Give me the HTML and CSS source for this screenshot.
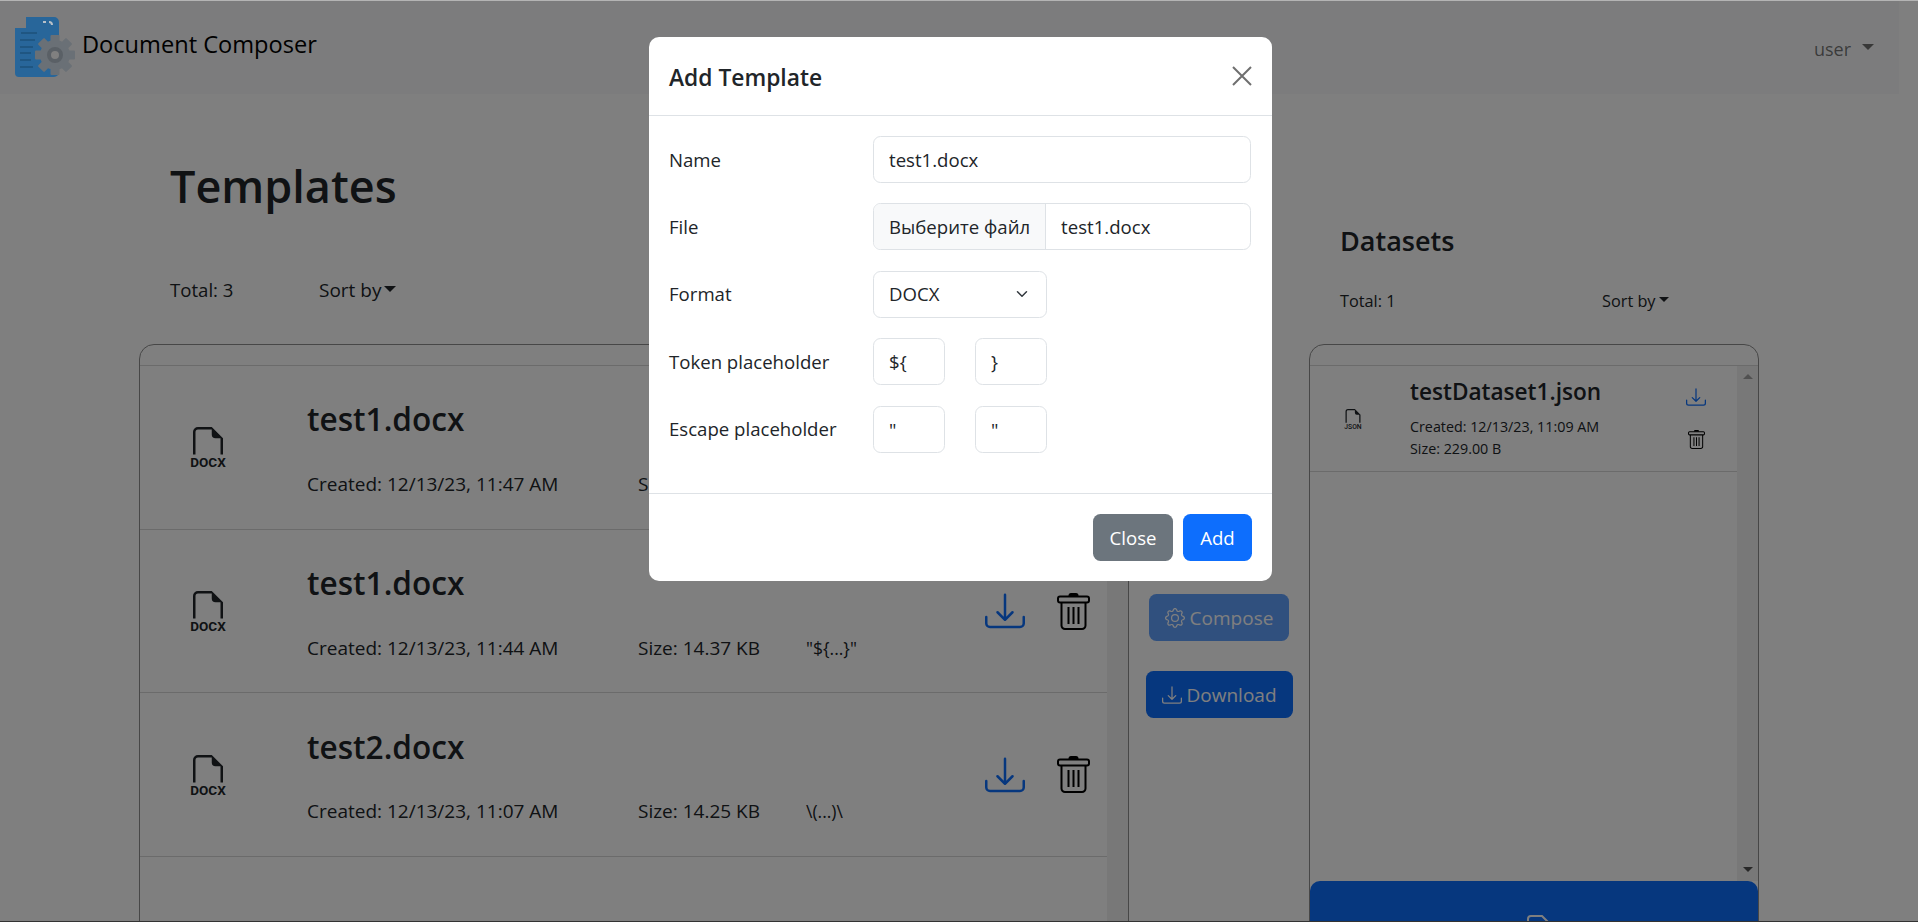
FILE: index.html
```html
<!DOCTYPE html>
<html lang="en">
<head>
<meta charset="UTF-8">
<meta name="viewport" content="width=device-width, initial-scale=1.0">
<title>Document Composer</title>
<link rel="stylesheet" href="styles.css">
</head>
<body>

<svg class="sprite" xmlns="http://www.w3.org/2000/svg">
    <symbol id="i-page" viewBox="0 0 16 16">
        <path d="M14 4.5V11h-1V4.5h-2A1.5 1.5 0 0 1 9.5 3V1H4a1 1 0 0 0-1 1v9H2V2a2 2 0 0 1 2-2h5.5L14 4.5Z"/>
    </symbol>
    <symbol id="i-download" viewBox="0 0 16 16">
        <path d="M.5 9.9a.5.5 0 0 1 .5.5v2.5a1 1 0 0 0 1 1h12a1 1 0 0 0 1-1v-2.5a.5.5 0 0 1 1 0v2.5a2 2 0 0 1-2 2H2a2 2 0 0 1-2-2v-2.5a.5.5 0 0 1 .5-.5z"/>
        <path d="M7.646 11.854a.5.5 0 0 0 .708 0l3-3a.5.5 0 0 0-.708-.708L8.5 10.293V1.5a.5.5 0 0 0-1 0v8.793L5.354 8.146a.5.5 0 1 0-.708.708l3 3z"/>
    </symbol>
    <symbol id="i-trash" viewBox="0 0 33 37">
        <path d="M11.5 3V2.500Q11.500 0 14 0h5q2.500 0 2.500 2.500V3z" fill="#000"/>
        <rect x="1" y="3.500" width="31" height="6" rx="2" fill="none" stroke="#000" stroke-width="2"/>
        <path d="M4.500 9.500V32.500a3.500 3.500 0 0 0 3.500 3.500H25a3.500 3.500 0 0 0 3.500-3.500V9.500" fill="none" stroke="#000" stroke-width="2"/>
        <path d="M11.500 14V31M16.500 14V31M21.500 14V31" fill="none" stroke="#000" stroke-width="2"/>
    </symbol>
    <symbol id="i-gear" viewBox="0 0 16 16">
        <path d="M8 4.754a3.246 3.246 0 1 0 0 6.492 3.246 3.246 0 0 0 0-6.492zM5.754 8a2.246 2.246 0 1 1 4.492 0 2.246 2.246 0 0 1-4.492 0z"/>
        <path d="M9.796 1.343c-.527-1.790-3.065-1.790-3.592 0l-.094.319a.873.873 0 0 1-1.255.52l-.292-.16c-1.640-.892-3.433.902-2.540 2.541l.159.292a.873.873 0 0 1-.52 1.255l-.319.094c-1.790.527-1.790 3.065 0 3.592l.319.094a.873.873 0 0 1 .52 1.255l-.16.292c-.892 1.640.901 3.434 2.541 2.540l.292-.159a.873.873 0 0 1 1.255.52l.094.319c.527 1.790 3.065 1.790 3.592 0l.094-.319a.873.873 0 0 1 1.255-.52l.292.16c1.640.893 3.434-.902 2.540-2.541l-.159-.292a.873.873 0 0 1 .52-1.255l.319-.094c1.790-.527 1.790-3.065 0-3.592l-.319-.094a.873.873 0 0 1-.52-1.255l.16-.292c.893-1.640-.902-3.433-2.541-2.540l-.292.159a.873.873 0 0 1-1.255-.52l-.094-.319zm-2.633.283c.246-.835 1.428-.835 1.674 0l.094.319a1.873 1.873 0 0 0 2.693 1.115l.291-.16c.764-.415 1.600.42 1.184 1.185l-.159.292a1.873 1.873 0 0 0 1.116 2.692l.318.094c.835.246.835 1.428 0 1.674l-.319.094a1.873 1.873 0 0 0-1.115 2.693l.16.291c.415.764-.42 1.600-1.185 1.184l-.291-.159a1.873 1.873 0 0 0-2.693 1.116l-.094.318c-.246.835-1.428.835-1.674 0l-.094-.319a1.873 1.873 0 0 0-2.692-1.115l-.292.16c-.764.415-1.600-.42-1.184-1.185l.159-.291A1.873 1.873 0 0 0 1.945 8.930l-.319-.094c-.835-.246-.835-1.428 0-1.674l.319-.094A1.873 1.873 0 0 0 3.060 4.377l-.16-.292c-.415-.764.42-1.600 1.185-1.184l.292.159a1.873 1.873 0 0 0 2.692-1.115l.094-.319z"/>
    </symbol>
</svg>

<div class="page">
    <nav class="navbar">
        <div class="brand">
            <svg class="logo" viewBox="0 0 60 60">
                <path class="logo-doc" d="M11 0H39a5 5 0 0 1 5 5V55a5 5 0 0 1-5 5H4a4 4 0 0 1-4-4V11H11z"/>
                <path class="logo-lines" d="M6 16H22M5 23H20M5 30H18M5 36H16M5 43H16M5 50H18"/>
                <path class="logo-mark" d="M28 5h3M34 5a3 3 0 0 1 3 3"/>
                <g class="logo-gear">
                    <circle cx="40" cy="38" r="15"/>
                    <rect x="35.500" y="18" width="9" height="40" rx="1"/>
                    <rect x="35.500" y="18" width="9" height="40" rx="1" transform="rotate(45 40 38)"/>
                    <rect x="35.500" y="18" width="9" height="40" rx="1" transform="rotate(90 40 38)"/>
                    <rect x="35.500" y="18" width="9" height="40" rx="1" transform="rotate(135 40 38)"/>
                </g>
                <circle class="logo-hub" cx="40" cy="38" r="6"/>
            </svg>
            <span class="brand-name">Document Composer</span>
        </div>
        <div class="user-menu">user<span class="caret"></span></div>
    </nav>

    <div class="main">
        <section class="col-templates">
            <h1 class="page-title">Templates</h1>
            <div class="toolbar">
                <span class="total">Total: 3</span>
                <span class="sort">Sort by<span class="caret caret-tight"></span></span>
            </div>
            <div class="card">
                <div class="card-scroll">
                    <div class="list">
                        <div class="tpl-row">
                            <div class="tpl-icon">
                                <svg class="filetype" viewBox="0 0 16 18"><use href="#i-page" width="16" height="16"/><text x="8" y="15.900" text-anchor="middle">DOCX</text></svg>
                            </div>
                            <div class="tpl-body">
                                <h3 class="tpl-name">test1.docx</h3>
                                <div class="tpl-meta">
                                    <span class="meta-created">Created: 12/13/23, 11:47 AM</span>
                                    <span class="meta-size">Size: 14.37 KB</span>
                                    <span class="meta-format">"${...}"</span>
                                </div>
                            </div>
                            <div class="tpl-actions">
                                <svg class="ic-download"><use href="#i-download"/></svg>
                                <svg class="ic-trash"><use href="#i-trash"/></svg>
                            </div>
                        </div>
                        <div class="tpl-row">
                            <div class="tpl-icon">
                                <svg class="filetype" viewBox="0 0 16 18"><use href="#i-page" width="16" height="16"/><text x="8" y="15.900" text-anchor="middle">DOCX</text></svg>
                            </div>
                            <div class="tpl-body">
                                <h3 class="tpl-name">test1.docx</h3>
                                <div class="tpl-meta">
                                    <span class="meta-created">Created: 12/13/23, 11:44 AM</span>
                                    <span class="meta-size">Size: 14.37 KB</span>
                                    <span class="meta-format">"${...}"</span>
                                </div>
                            </div>
                            <div class="tpl-actions">
                                <svg class="ic-download"><use href="#i-download"/></svg>
                                <svg class="ic-trash"><use href="#i-trash"/></svg>
                            </div>
                        </div>
                        <div class="tpl-row">
                            <div class="tpl-icon">
                                <svg class="filetype" viewBox="0 0 16 18"><use href="#i-page" width="16" height="16"/><text x="8" y="15.900" text-anchor="middle">DOCX</text></svg>
                            </div>
                            <div class="tpl-body">
                                <h3 class="tpl-name">test2.docx</h3>
                                <div class="tpl-meta">
                                    <span class="meta-created">Created: 12/13/23, 11:07 AM</span>
                                    <span class="meta-size">Size: 14.25 KB</span>
                                    <span class="meta-format">\(...)\</span>
                                </div>
                            </div>
                            <div class="tpl-actions">
                                <svg class="ic-download"><use href="#i-download"/></svg>
                                <svg class="ic-trash"><use href="#i-trash"/></svg>
                            </div>
                        </div>
                    </div>
                    <div class="scrollbar"></div>
                </div>
            </div>
        </section>

        <section class="col-actions">
            <button class="btn btn-primary btn-disabled" type="button"><svg class="btn-icon"><use href="#i-gear"/></svg>Compose</button>
            <button class="btn btn-primary" type="button"><svg class="btn-icon"><use href="#i-download"/></svg>Download</button>
        </section>

        <section class="col-datasets">
            <h4 class="section-title">Datasets</h4>
            <div class="toolbar toolbar-sm">
                <span class="total">Total: 1</span>
                <span class="sort">Sort by<span class="caret caret-tight"></span></span>
            </div>
            <div class="card">
                <div class="card-scroll card-scroll-short">
                    <div class="list">
                        <div class="ds-row">
                            <div class="ds-icon">
                                <svg class="filetype-sm" viewBox="0 0 16 18"><use href="#i-page" width="16" height="16"/><text x="8" y="15.900" text-anchor="middle">JSON</text></svg>
                            </div>
                            <div class="ds-body">
                                <h5 class="ds-name">testDataset1.json</h5>
                                <div class="ds-meta">Created: 12/13/23, 11:09 AM</div>
                                <div class="ds-meta">Size: 229.00 B</div>
                            </div>
                            <div class="ds-actions">
                                <svg class="ic-download-sm"><use href="#i-download"/></svg>
                                <svg class="ic-trash-sm"><use href="#i-trash"/></svg>
                            </div>
                        </div>
                    </div>
                    <div class="scrollbar">
                        <span class="arrow-up"></span>
                        <span class="arrow-down"></span>
                    </div>
                </div>
                <button class="btn-upload" type="button">
                    <svg class="upload-icon" viewBox="0 0 24 30"><path d="M1 29V4a3 3 0 0 1 3-3H15L23 9V29"/></svg>
                </button>
            </div>
        </section>
    </div>
</div>

<div class="backdrop"></div>

<div class="modal">
    <div class="modal-header">
        <h5 class="modal-title">Add Template</h5>
        <svg class="modal-close" viewBox="0 0 20 20"><path d="M1 1L19 19M19 1L1 19"/></svg>
    </div>
    <form class="modal-body">
        <div class="form-row">
            <label class="form-label" for="tplName">Name</label>
            <input class="form-control" id="tplName" type="text" value="test1.docx">
        </div>
        <div class="form-row">
            <label class="form-label">File</label>
            <div class="file-input">
                <span class="file-button">Выберите файл</span>
                <span class="file-name">test1.docx</span>
            </div>
        </div>
        <div class="form-row">
            <label class="form-label" for="tplFormat">Format</label>
            <select class="form-select" id="tplFormat">
                <option>DOCX</option>
            </select>
        </div>
        <div class="form-row">
            <label class="form-label" for="tokenStart">Token placeholder</label>
            <div class="pair">
                <input class="form-control" id="tokenStart" type="text" value="${">
                <input class="form-control" type="text" value="}">
            </div>
        </div>
        <div class="form-row">
            <label class="form-label" for="escapeStart">Escape placeholder</label>
            <div class="pair">
                <input class="form-control" id="escapeStart" type="text" value="&quot;">
                <input class="form-control" type="text" value="&quot;">
            </div>
        </div>
    </form>
    <div class="modal-footer">
        <button class="btn btn-secondary" type="button">Close</button>
        <button class="btn btn-add" type="button">Add</button>
    </div>
</div>

</body>
</html>
```

FILE: styles.css
```css
* {
    box-sizing: border-box;
}
html, body {
    height: 100%;
    overflow: hidden;
}
body {
    margin: 0;
    background-color: #ffffff;
    color: #212529;
    font-family: "Open Sans", "Noto Sans", sans-serif;
    font-size: 18.6px;
    line-height: 30px;
}
h1, h3, h4, h5 {
    margin: 0;
    font-weight: 600;
}
.sprite {
    display: none;
}
.page {
    width: 1899px;
}

/* navbar */
.navbar {
    display: flex;
    align-items: center;
    justify-content: space-between;
    height: 94px;
    padding: 0 25px 0 15px;
    background-color: #f8f9fa;
}
.brand {
    display: flex;
    align-items: center;
}
/* logo keeps its own dimmed colours, the image was darker than the overlay gives */
.logo {
    position: relative;
    z-index: 1;
    width: 60px;
    height: 60px;
}
.logo-doc {
    fill: #28669a;
}
.logo-lines {
    fill: none;
    stroke: #1f5682;
    stroke-width: 2;
}
.logo-mark {
    fill: none;
    stroke: #b8c0c8;
    stroke-width: 2;
}
.logo-gear {
    fill: #6a7076;
}
.logo-hub {
    fill: #808080;
    stroke: #5a6066;
    stroke-width: 4;
}
.brand-name {
    margin: 0 0 6px 7px;
    font-size: 23.6px;
    color: #000000;
}
.user-menu {
    display: flex;
    align-items: center;
    margin-top: 3px;
    color: rgba(0, 0, 0, 0.55);
    font-size: 18px;
}
.caret {
    width: 0;
    height: 0;
    margin: -3px 0 0 11px;
    border-top: 6px solid currentColor;
    border-left: 6px solid transparent;
    border-right: 6px solid transparent;
}
.caret-tight {
    margin: -3px 0 0 3px;
}

/* columns */
.main {
    display: grid;
    grid-template-columns: 990px 180px 450px;
    padding-left: 139px;
}
.col-templates {
    padding-top: 54px;
}
.col-actions {
    display: flex;
    flex-direction: column;
    align-items: center;
    gap: 30px;
    padding-top: 500px;
    font-size: 19px;
}
.col-actions .btn {
    padding: 0 16px;
}
.col-datasets {
    padding-top: 124px;
}
.page-title {
    margin: 0 0 52px 31px;
    font-size: 45px;
    line-height: 75px;
}
.section-title {
    margin: 0 0 25px 31px;
    font-size: 27px;
    line-height: 45px;
}
.toolbar {
    display: flex;
    margin-bottom: 39px;
    padding-left: 31px;
}
.total {
    width: 149px;
}
.sort {
    display: flex;
    align-items: center;
    font-size: 19px;
}
.toolbar-sm {
    margin-bottom: 30px;
    font-size: 16.3px;
    line-height: 26px;
}
.toolbar-sm .total {
    width: 262px;
}
.toolbar-sm .sort {
    font-size: 16.3px;
}
.toolbar-sm .caret {
    border-top-width: 5px;
    border-left-width: 5px;
    border-right-width: 5px;
}

/* cards */
.card {
    height: 700px;
    padding-top: 20px;
    border: 1px solid #8e8e8e;
    border-radius: 15px;
    overflow: hidden;
}
.card-scroll {
    display: flex;
    height: 680px;
    border-top: 1px solid #d6d6d6;
}
.card-scroll-short {
    height: 516px;
}
.list {
    flex: 1;
}
.scrollbar {
    display: flex;
    flex-direction: column;
    justify-content: space-between;
    align-items: center;
    flex: none;
    width: 21px;
    padding: 8px 0 9px;
    background-color: #f1f1f1;
}
.arrow-up, .arrow-down {
    width: 0;
    height: 0;
    border-left: 5px solid transparent;
    border-right: 5px solid transparent;
}
.arrow-up {
    border-bottom: 5px solid #a3a3a3;
}
.arrow-down {
    border-top: 5px solid #505050;
}

/* template rows */
.tpl-row {
    display: flex;
    align-items: center;
    height: 163.7px;
    border-bottom: 1px solid #d6d6d6;
}
.tpl-icon {
    flex: none;
    width: 167px;
    padding-left: 48px;
}
.filetype {
    display: block;
    width: 40px;
    height: 45px;
    margin-top: 5px;
    fill: #212529;
}
.filetype text {
    font-family: Roboto, sans-serif;
    font-size: 5.4px;
    font-weight: 700;
}
.tpl-body {
    flex: 1;
    padding-top: 2.5px;
}
.tpl-name {
    margin-bottom: 28.5px;
    font-size: 31.6px;
    line-height: 42px;
}
.tpl-meta {
    display: flex;
    font-size: 19px;
}
.meta-created {
    width: 331px;
}
.meta-size {
    width: 168px;
}
.meta-format {
    font-size: 17.5px;
}
.tpl-actions {
    display: flex;
    align-items: center;
    gap: 32px;
    padding-right: 17px;
}
.ic-download {
    width: 40px;
    height: 40px;
    fill: #0d6efd;
}
.ic-trash {
    width: 33px;
    height: 37px;
}

/* dataset rows */
.ds-row {
    display: flex;
    align-items: center;
    height: 106px;
    border-bottom: 1px solid #d6d6d6;
}
.ds-icon {
    flex: none;
    width: 100px;
    padding-left: 33px;
}
.filetype-sm {
    display: block;
    width: 20px;
    height: 22.5px;
    margin-top: 2.5px;
    fill: #212529;
}
.filetype-sm text {
    font-family: Roboto, sans-serif;
    font-size: 5.4px;
    font-weight: 500;
}
.ds-body {
    flex: 1;
}
.ds-name {
    margin-bottom: 9px;
    font-size: 22.6px;
    line-height: 30px;
}
.ds-meta {
    font-size: 14.3px;
    line-height: 22.5px;
}
.ds-actions {
    display: flex;
    flex-direction: column;
    align-items: center;
    gap: 23px;
    padding: 0 31px 2px 0;
}
.ic-download-sm {
    width: 20px;
    height: 20px;
    fill: #0d6efd;
}
.ic-trash-sm {
    width: 17px;
    height: 19px;
}
.btn-upload {
    display: flex;
    justify-content: center;
    width: 100%;
    height: 100px;
    padding: 34px 0 0 10px;
    border: 0;
    border-radius: 10px;
    background-color: #0d6efd;
}
.upload-icon {
    width: 24px;
    height: 30px;
    fill: none;
    stroke: #ffffff;
    stroke-width: 2;
}

/* buttons */
.btn {
    display: inline-flex;
    align-items: center;
    justify-content: center;
    height: 47px;
    padding: 0 15px;
    border: 0;
    border-radius: 7.5px;
    color: #ffffff;
    font: inherit;
    cursor: pointer;
}
.btn-primary, .btn-add {
    background-color: #0d6efd;
}
.btn-secondary {
    width: 80px;
    background-color: #6c757d;
}
.btn-add {
    width: 69px;
}
.btn-disabled {
    opacity: 0.65;
}
.btn-icon {
    width: 20px;
    height: 20px;
    margin-right: 5px;
    fill: currentColor;
}

/* modal, sits over the dimmed page */
.backdrop {
    position: fixed;
    inset: 0;
    border-top: 1px solid #b4b4b4;
    border-bottom: 1px solid #333333;
    background-color: rgba(0, 0, 0, 0.5);
}
.modal {
    position: fixed;
    top: 37px;
    left: 649px;
    width: 623px;
    height: 544px;
    border-radius: 10px;
    background-color: #ffffff;
}
.modal-header {
    display: flex;
    align-items: center;
    justify-content: space-between;
    height: 79px;
    padding: 0 20px;
    border-bottom: 1px solid #dee2e6;
}
.modal-title {
    margin-top: 4px;
    font-size: 22.8px;
    line-height: 37.5px;
}
.modal-close {
    width: 20px;
    height: 20px;
    fill: none;
    stroke: #6f6f6f;
    stroke-width: 2;
}
.modal-body {
    height: 378px;
    padding: 20px 21px 0 20px;
    border-bottom: 1px solid #dee2e6;
}
.form-row {
    display: flex;
    align-items: center;
    margin-bottom: 20.4px;
}
.form-label {
    flex: none;
    width: 204px;
}
.form-control, .form-select, .file-input {
    height: 47px;
    border: 1px solid #dee2e6;
    border-radius: 7.5px;
    background-color: #ffffff;
    color: #212529;
    font: inherit;
}
.form-control {
    width: 100%;
    padding: 0 15px;
}
.file-input {
    display: flex;
    flex: 1;
    align-items: center;
    overflow: hidden;
}
.file-button {
    display: flex;
    align-items: center;
    height: 100%;
    padding: 0 15px;
    border-right: 1px solid #dee2e6;
    background-color: #f8f9fa;
}
.file-name {
    padding-left: 15px;
}
.form-select {
    width: 174px;
    padding: 0 15px;
    appearance: none;
    background-image: url("data:image/svg+xml,%3Csvg xmlns='http://www.w3.org/2000/svg' viewBox='0 0 16 16'%3E%3Cpath fill='none' stroke='%23343a40' stroke-linecap='round' stroke-linejoin='round' stroke-width='2' d='m2 5 6 6 6-6'/%3E%3C/svg%3E");
    background-repeat: no-repeat;
    background-position: right 16px center;
    background-size: 16px 12px;
}
.pair {
    display: flex;
    gap: 30px;
}
.pair .form-control {
    width: 72px;
}
.modal-footer {
    display: flex;
    justify-content: flex-end;
    gap: 10px;
    padding: 20px 20px 0 0;
}
```
